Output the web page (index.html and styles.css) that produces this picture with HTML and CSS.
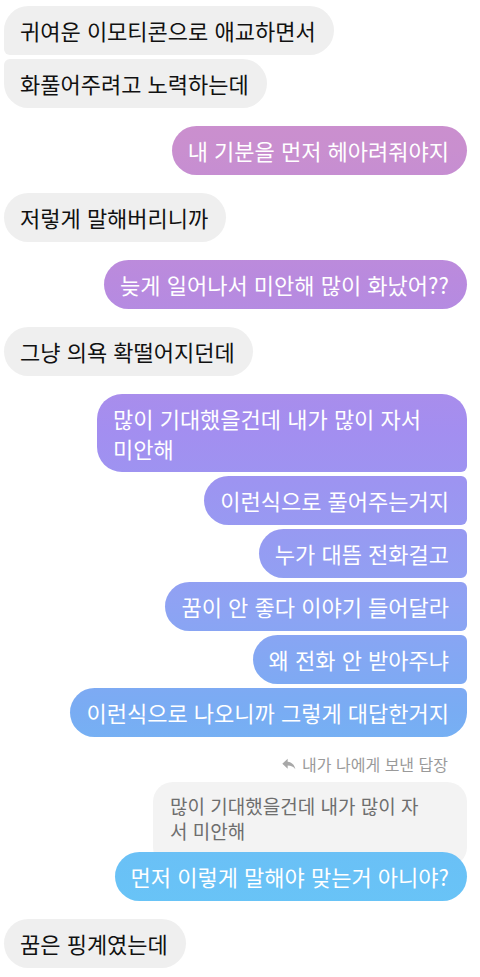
FILE: index.html
```html
<!DOCTYPE html>
<html lang="ko">
<head>
    <meta charset="UTF-8">
    <meta name="viewport" content="width=device-width, initial-scale=1.0">
    <title>DM</title>
    <link rel="stylesheet" href="styles.css">
</head>
<body>

    <div class="thread">
        <div class="msg in top">귀여운 이모티콘으로 애교하면서</div>
        <div class="msg in bottom">화풀어주려고 노력하는데</div>

        <div class="msg out new">내 기분을 먼저 헤아려줘야지</div>

        <div class="msg in new">저렇게 말해버리니까</div>

        <div class="msg out new">늦게 일어나서 미안해 많이 화났어??</div>

        <div class="msg in new">그냥 의욕 확떨어지던데</div>

        <div class="msg out new top wide">많이 기대했을건데 내가 많이 자서<br>미안해</div>
        <div class="msg out middle">이런식으로 풀어주는거지</div>
        <div class="msg out middle">누가 대뜸 전화걸고</div>
        <div class="msg out middle">꿈이 안 좋다 이야기 들어달라</div>
        <div class="msg out middle">왜 전화 안 받아주냐</div>
        <div class="msg out bottom">이런식으로 나오니까 그렇게 대답한거지</div>

        <!-- reply to own message -->
        <div class="reply">
            <div class="reply-label">
                <svg class="reply-icon" viewBox="0 0 24 24" width="16" height="16">
                    <path d="M10 8.5V4L2 11.5 10 19v-4.6c5.2 0 8.9 1.7 11.6 5.6C20.5 14.4 17.3 9.4 10 8.5z" fill="#a8a8a8"/>
                </svg>
                내가 나에게 보낸 답장
            </div>
            <div class="quote">많이 기대했을건데 내가 많이 자<br>서 미안해</div>
            <div class="msg out answer">먼저 이렇게 말해야 맞는거 아니야?</div>
        </div>

        <div class="msg in new">꿈은 핑계였는데</div>
    </div>

</body>
</html>
```

FILE: styles.css
```css
/* Base styling */
body {
    margin: 0;
    padding: 0;
    background: #ffffff;
    font-family: "Noto Sans CJK KR", "Noto Sans", sans-serif;
}

.thread {
    display: flex;
    flex-direction: column;
    padding: 6px 13px 0 4px;
}

/* Bubbles */
.msg {
    font-size: 22px;
    line-height: 27px;
    padding: 11px 18px 11px 16px;
    border-radius: 25px;
    margin-top: 4px;
    box-sizing: border-box;
    white-space: nowrap;
}

.msg:first-child {
    margin-top: 0;
}

.msg.new {
    margin-top: 18px;
}

.msg.wide {
    width: 370px;
    line-height: 30px;
    padding-top: 9px;
    padding-bottom: 9px;
}

.msg.in {
    align-self: flex-start;
    background: #efefef;
    color: #111;
}

.msg.out {
    align-self: flex-end;
    color: #fff;
    background: linear-gradient(to bottom,
        #d28fcb 0px,
        #c98fcf 150px,
        #b98ade 280px,
        #a38ef0 430px,
        #8fa2f3 600px,
        #79acf3 710px,
        #6ac0f6 850px,
        #66c8f7 977px) fixed;
}

/* grouped corners */
.msg.in.top {
    border-bottom-left-radius: 6px;
}

.msg.in.bottom {
    border-top-left-radius: 6px;
}

.msg.out.top {
    border-bottom-right-radius: 6px;
}

.msg.out.middle {
    border-top-right-radius: 6px;
    border-bottom-right-radius: 6px;
}

.msg.out.bottom {
    border-top-right-radius: 6px;
}

/* Reply */
.reply {
    align-self: flex-end;
    display: flex;
    flex-direction: column;
    align-items: flex-end;
    margin-top: 18px;
}

.reply-label {
    display: flex;
    align-items: center;
    gap: 5px;
    font-size: 16px;
    line-height: 18px;
    color: #9a9a9a;
    margin-right: 19px;
}

.reply-icon {
    display: block;
}

.quote {
    margin-top: 9px;
    width: 314px;
    box-sizing: border-box;
    background: #f3f3f3;
    color: #6e6e6e;
    font-size: 19px;
    line-height: 25px;
    padding: 11px 17px 24px 17px;
    border-radius: 20px;
}

.msg.answer {
    margin-top: -15px;
    position: relative;
}
```
